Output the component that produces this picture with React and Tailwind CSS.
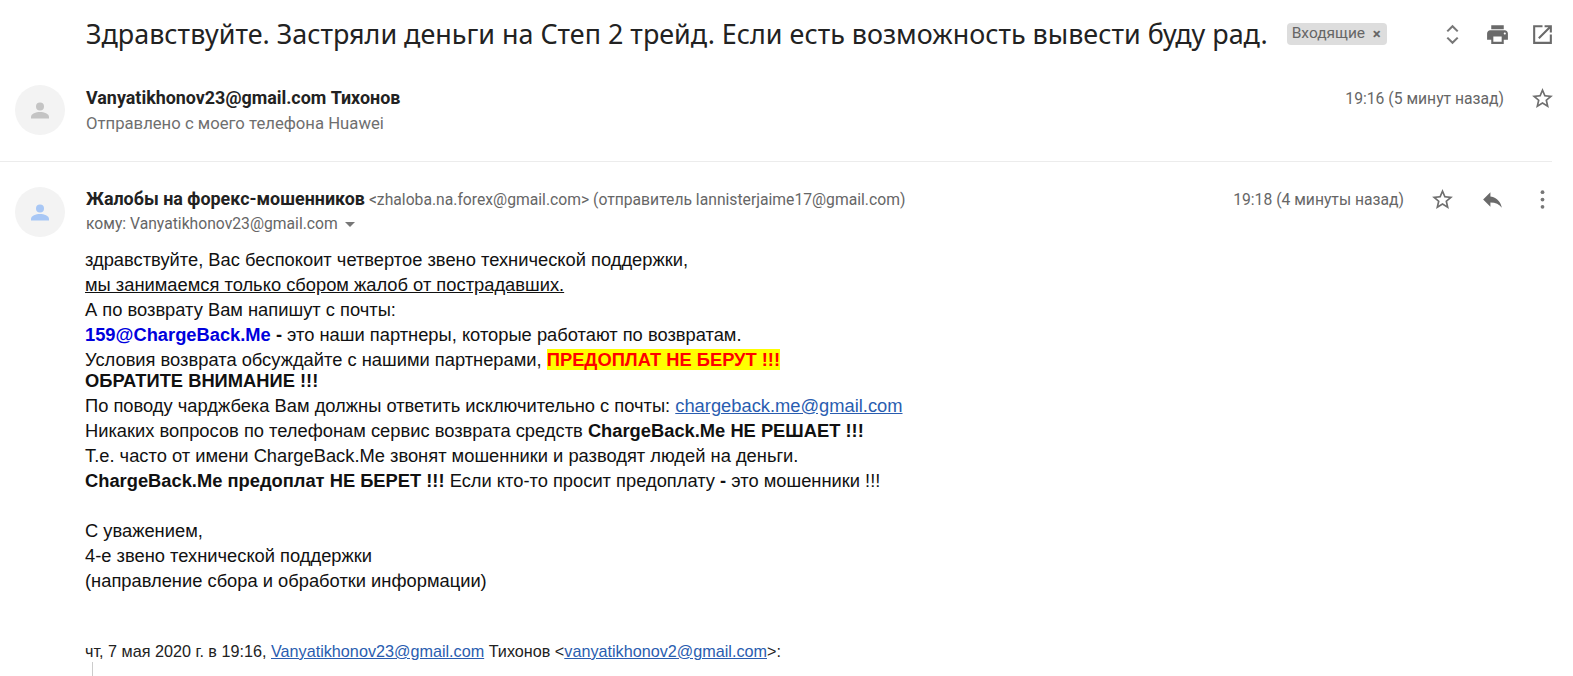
const Star = ({ className = "" }) => (
  <svg className={className} width="25" height="25" viewBox="0 0 24 24" fill="#6f6f6f"><path d="M22 9.24l-7.19-.62L12 2 9.19 8.63 2 9.24l5.46 4.73L5.82 21 12 17.27 18.18 21l-1.63-7.03L22 9.24zM12 15.4l-3.76 2.27 1-4.28-3.32-2.88 4.38-.38L12 6.1l1.71 4.04 4.38.38-3.32 2.88 1 4.28L12 15.4z"/></svg>
);
const Avatar = ({ color }) => (
  <div className="w-[50px] h-[50px] rounded-full bg-[#f3f3f3] flex items-center justify-center shrink-0">
    <svg width="24" height="24" viewBox="0 0 24 24" fill={color}><circle cx="12" cy="8.5" r="4"/><path d="M3 19c0-3.2 5-5 9-5s9 1.800 9 5v1.500H3z"/></svg>
  </div>
);
const Line = ({ className = "h-[25px] leading-[25px]", children }) => <div className={className}>{children}</div>;
const Mail = ({ children }) => <a className="text-[#2a5db0] underline">{children}</a>;

export default function App() {
  return (
    <div className="w-[1573px] h-[676px] overflow-hidden bg-white text-[#202124] font-['Roboto',sans-serif]">
      <div className="h-[68px] flex items-center pl-[86px] pr-[18px]">
        <h1 className="text-[26.920px] font-normal text-[#222] font-['Noto_Sans',sans-serif] whitespace-nowrap">Здравствуйте. Застряли деньги на Степ 2 трейд. Если есть возможность вывести буду рад.</h1>
        <div className="ml-[19px] h-[22px] w-[100px] rounded-[4px] bg-[#dddddd] flex items-center justify-between pl-[5px] pr-[6px] text-[15.500px] text-[#666]">
          <span>Входящие</span><span className="text-[15px] font-bold">×</span>
        </div>
        <div className="ml-auto flex items-center gap-[20px]">
          <svg width="25" height="25" viewBox="0 0 24 24" fill="none" stroke="#777" strokeWidth="2"><path d="M7 9l5-5 5 5M7 15l5 5 5-5"/></svg>
          <svg width="25" height="25" viewBox="0 0 24 24" fill="#6a6a6a"><path d="M19 8H5c-1.660 0-3 1.340-3 3v6h4v4h12v-4h4v-6c0-1.660-1.340-3-3-3zm-3 11H8v-5h8v5zm3-7c-.550 0-1-.450-1-1s.450-1 1-1 1 .450 1 1-.450 1-1 1zm-1-9H6v4h12V3z"/></svg>
          <svg width="25" height="25" viewBox="0 0 24 24" fill="#6a6a6a"><path d="M19 19H5V5h7V3H3v18h18v-9h-2v7zM14 3v2h3.590l-9.830 9.830 1.410 1.410L19 6.410V10h2V3h-7z"/></svg>
        </div>
      </div>

      <div className="h-[94px] mr-[21px] border-b border-[#ececec] flex pl-[15px]">
        <div className="pt-[17px]"><Avatar color="#c4c4c4" /></div>
        <div className="ml-[21px] pt-[19px]">
          <div className="text-[17.900px] leading-[22px] font-bold text-[#222]">Vanyatikhonov23@gmail.com Тихонов</div>
          <div className="text-[16.700px] leading-[22px] mt-[4px] text-[#6f6f6f]">Отправлено с моего телефона Huawei</div>
        </div>
        <div className="ml-auto pt-[18px] flex items-start">
          <span className="text-[15.700px] leading-[25px] text-[#666] mr-[26px]">19:16 (5 минут назад)</span>
          <Star className="-mr-[3px]" />
        </div>
      </div>

      <div className="flex pl-[15px] pr-[18px] pt-[25px]">
        <Avatar color="#a8c7f5" />
        <div className="ml-[21px]">
          <div className="h-[22px] leading-[22px] mt-[1px] whitespace-nowrap">
            <span className="text-[17.900px] font-bold text-[#222]">Жалобы на форекс-мошенников</span>{" "}
            <span className="text-[15.700px] text-[#666]">&lt;zhaloba.na.forex@gmail.com&gt; (отправитель lannisterjaime17@gmail.com)</span>
          </div>
          <div className="h-[24px] leading-[24px] mt-[2px] text-[15.700px] text-[#666] flex items-center">
            кому: Vanyatikhonov23@gmail.com
            <svg className="ml-[7px]" width="10" height="5" viewBox="0 0 10 5" fill="#777"><path d="M0 0h10L5 5z"/></svg>
          </div>
        </div>
        <div className="ml-auto flex items-start">
          <span className="text-[15.700px] leading-[25px] text-[#666] mr-[26px]">19:18 (4 минуты назад)</span>
          <Star />
          <svg className="ml-[25px]" width="25" height="25" viewBox="0 0 24 24" fill="#6a6a6a"><path d="M10 9V5l-7 7 7 7v-4.100c5 0 8.500 1.600 11 5.100-1-5-4-10-11-11z"/></svg>
          <svg className="ml-[25px]" width="25" height="25" viewBox="0 0 24 24" fill="#777"><circle cx="12" cy="5" r="1.800"/><circle cx="12" cy="12" r="1.800"/><circle cx="12" cy="19" r="1.800"/></svg>
        </div>
      </div>

      <div className="ml-[85px] mt-[10px] font-['Liberation_Sans',sans-serif] text-[18.320px] text-[#111] whitespace-nowrap">
        <Line>здравствуйте, Вас беспокоит четвертое звено технической поддержки,</Line>
        <Line><span className="underline">мы занимаемся только сбором жалоб от пострадавших.</span></Line>
        <Line>А по возврату Вам напишут с почты:</Line>
        <Line><b className="text-[#0000dd]">159@ChargeBack.Me</b> <b>-</b> это наши партнеры, которые работают по возвратам.</Line>
        <Line>Условия возврата обсуждайте с нашими партнерами, <b className="bg-[#ffff00] text-[#ff0000]">ПРЕДОПЛАТ НЕ БЕРУТ !!!</b></Line>
        <Line className="h-[21px] leading-[17px] font-bold">ОБРАТИТЕ ВНИМАНИЕ !!!</Line>
        <Line>По поводу чарджбека Вам должны ответить исключительно с почты: <Mail>chargeback.me@gmail.com</Mail></Line>
        <Line>Никаких вопросов по телефонам сервис возврата средств <b>ChargeBack.Me НЕ РЕШАЕТ !!!</b></Line>
        <Line>Т.е. часто от имени ChargeBack.Me звонят мошенники и разводят людей на деньги.</Line>
        <Line><b>ChargeBack.Me предоплат НЕ БЕРЕТ !!!</b> Если кто-то просит предоплату <b>-</b> это мошенники !!!</Line>
        <Line> </Line>
        <Line>С уважением,</Line>
        <Line>4-е звено технической поддержки</Line>
        <Line>(направление сбора и обработки информации)</Line>
        <div className="mt-[47px] text-[16.200px] leading-[22px] text-[#222]">
          чт, 7 мая 2020 г. в 19:16, <Mail>Vanyatikhonov23@gmail.com</Mail> Тихонов &lt;<Mail>vanyatikhonov2@gmail.com</Mail>&gt;:
        </div>
        <div className="ml-[7px] h-[20px] w-px bg-[#ccc]" />
      </div>
    </div>
  );
}
